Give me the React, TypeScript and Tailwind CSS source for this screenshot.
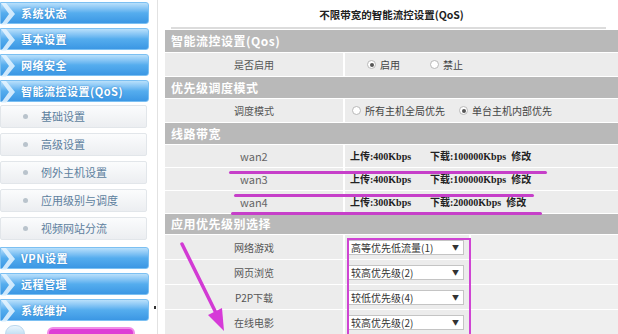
import React from "react";

const font = { fontFamily: '"Noto Sans CJK SC", "Noto Sans", sans-serif' };
const serif = { fontFamily: '"Liberation Serif", "Noto Sans CJK SC", serif' };

function BlueBar({ label }: { label: string }) {
  return (
    <div className="relative h-[22px] w-[149px] rounded-r-[3px] border border-[#7cc0f2] bg-gradient-to-b from-[#b9e0fb] via-[#55adee] to-[#3b97e4] flex items-center pl-[20px]">
      <svg className="absolute left-0 top-0" width="16" height="22" viewBox="0 0 16 22">
        <polygon points="0,0 5,0 14,11 5,22 0,22 8,11" fill="#e6f4ff" opacity="0.85" />
      </svg>
      <span className="text-[11px] font-bold text-white tracking-[0.5px] [text-shadow:0_0_2px_#2a7cc4]">{label}</span>
    </div>
  );
}

function SubItem({ label }: { label: string }) {
  return (
    <div className="h-[23px] w-[147px] rounded-[2px] border border-[#e2e6ea] bg-gradient-to-b from-[#fbfcfd] to-[#eceef1] flex items-center">
      <span className="ml-[22px] h-[5px] w-[5px] rounded-full bg-[#b9c3cc]" />
      <span className="ml-[13px] text-[11px] text-[#5d7f9e]">{label}</span>
    </div>
  );
}

function Radio({ on, label }: { on?: boolean; label: string }) {
  return (
    <span className="flex items-center gap-[4px]">
      <span className="flex h-[9px] w-[9px] items-center justify-center rounded-full border border-[#b8b8b8] bg-white">
        {on && <span className="h-[4px] w-[4px] rounded-full bg-[#555]" />}
      </span>
      <span className="text-[10px] text-[#444]">{label}</span>
    </span>
  );
}

function Header({ label, h }: { label: string; h: string }) {
  return (
    <div className={`${h} flex items-center bg-[#b9b9b9] pl-[6px]`}>
      <span className="text-[12px] font-bold text-white tracking-[0.5px]">{label}</span>
    </div>
  );
}

function Row({ h, label, children }: { h: string; label: string; children: React.ReactNode }) {
  return (
    <div className={`${h} flex gap-[2px]`}>
      <div className="w-[178px] flex items-center justify-center bg-[#ececec] text-[10px] text-[#555]">{label}</div>
      <div className="flex-1 flex items-center bg-[#ececec]">{children}</div>
    </div>
  );
}

function WanRow({ name, up, down }: { name: string; up: string; down: string }) {
  return (
    <div className="h-[22px] flex gap-[2px]">
      <div className="w-[178px] flex items-center bg-[#ececec] pl-[75px] text-[11px] text-[#666]">{name}</div>
      <div className="flex-1 flex items-center bg-[#ececec] pl-[5px] text-[10px] font-bold text-[#222]" style={serif}>
        <span className="w-[80px]">上传:{up}Kbps</span>
        <span>下载:{down}Kbps&nbsp; 修改</span>
      </div>
    </div>
  );
}

function AppRow({ label, value, h }: { label: string; value: string; h: string }) {
  return (
    <div className={`${h} flex gap-[2px]`}>
      <div className="w-[178px] flex items-center justify-center bg-[#ececec] text-[10px] text-[#555]">{label}</div>
      <div className="w-[124px] flex items-center bg-[#ececec] pl-[3px]">
        <div className="h-[15px] w-[116px] flex items-center justify-between border border-[#c4c4c4] bg-white px-[2px] text-[10px] text-[#333]">
          <span>{value}</span>
          <span className="text-[7px] pr-[2px]">▼</span>
        </div>
      </div>
      <div className="flex-1 bg-[#efefef]" />
    </div>
  );
}

export default function App() {
  return (
    <div className="flex h-[334px] w-[618px] overflow-hidden bg-white" style={font}>
      {/* sidebar */}
      <div className="w-[150px] flex flex-col pt-[2px]">
        <div className="flex flex-col gap-[4px]">
          <BlueBar label="系统状态" />
          <BlueBar label="基本设置" />
          <BlueBar label="网络安全" />
          <BlueBar label="智能流控设置(QoS)" />
        </div>
        <div className="mt-[3px] flex flex-col gap-[5px]">
          <SubItem label="基础设置" />
          <SubItem label="高级设置" />
          <SubItem label="例外主机设置" />
          <SubItem label="应用级别与调度" />
          <SubItem label="视频网站分流" />
        </div>
        <div className="mt-[7px] flex flex-col gap-[4px]">
          <BlueBar label="VPN设置" />
          <BlueBar label="远程管理" />
          <BlueBar label="系统维护" />
        </div>
        <div className="mt-[4px] flex items-center gap-[22px] pl-[5px]">
          <span className="h-[18px] w-[20px] rounded-full border border-[#bcd9ee] bg-gradient-to-b from-[#eaf5fd] to-[#9fcbea]" />
          <span className="h-[14px] w-[88px] rounded-[6px] border-2 border-[#f08ce8] bg-[#dd3fd6]" />
        </div>
      </div>
      {/* divider */}
      <div className="w-[15px] flex justify-center">
        <div className="relative w-[1px] bg-[#e2e2e2]">
          <span className="absolute left-[-3px] top-[306px] h-[3px] w-[2px] bg-[#333]" />
        </div>
      </div>
      {/* main */}
      <div className="relative flex-1 flex flex-col">
        <div className="h-[34px] flex flex-col items-center">
          <div className="mt-[7px] text-[10.5px] font-bold text-[#222]">不限带宽的智能流控设置(QoS)</div>
          <div className="mt-[4px] ml-[-6px] h-[2px] w-[435px] bg-[#dcdcdc]" />
        </div>
        <div className="flex flex-col gap-[1px]">
          <Header h="h-[22px]" label="智能流控设置(Qos)" />
          <Row h="h-[23px]" label="是否启用">
            <div className="flex gap-[30px] pl-[22px]">
              <Radio on label="启用" />
              <Radio label="禁止" />
            </div>
          </Row>
          <Header h="h-[21px]" label="优先级调度模式" />
          <Row h="h-[23px]" label="调度模式">
            <div className="flex gap-[14px] pl-[7px]">
              <Radio label="所有主机全局优先" />
              <Radio on label="单台主机内部优先" />
            </div>
          </Row>
          <Header h="h-[21px]" label="线路带宽" />
          <WanRow name="wan2" up="400" down="100000" />
          <WanRow name="wan3" up="400" down="100000" />
          <WanRow name="wan4" up="300" down="20000" />
          <Header h="h-[20px]" label="应用优先级别选择" />
          <AppRow h="h-[24px]" label="网络游戏" value="高等优先低流量(1)" />
          <AppRow h="h-[24px]" label="网页浏览" value="较高优先级(2)" />
          <AppRow h="h-[24px]" label="P2P下载" value="较低优先级(4)" />
          <AppRow h="h-[24px]" label="在线电影" value="较高优先级(2)" />
        </div>

        {/* annotations */}
        <span className="absolute left-[64px] top-[171px] h-[3px] w-[318px] rounded-full bg-[#c63fc9]" />
        <span className="absolute left-[69px] top-[194px] h-[3px] w-[300px] rounded-full bg-[#c63fc9]" />
        <span className="absolute left-[66px] top-[212px] h-[3px] w-[311px] rounded-full bg-[#c63fc9]" />
        <span className="absolute left-[182px] top-[238px] h-[100px] w-[124px] border-2 border-[#cf44d3]" />
        <svg className="absolute left-0 top-0" width="100" height="334" viewBox="165 0 100 334">
          <line x1="182" y1="244" x2="216" y2="313" stroke="#d23ad4" strokeWidth="3.5" strokeLinecap="round" />
          <polygon points="224,331 222,308 208,315" fill="#d63ad8" />
        </svg>
      </div>
    </div>
  );
}
